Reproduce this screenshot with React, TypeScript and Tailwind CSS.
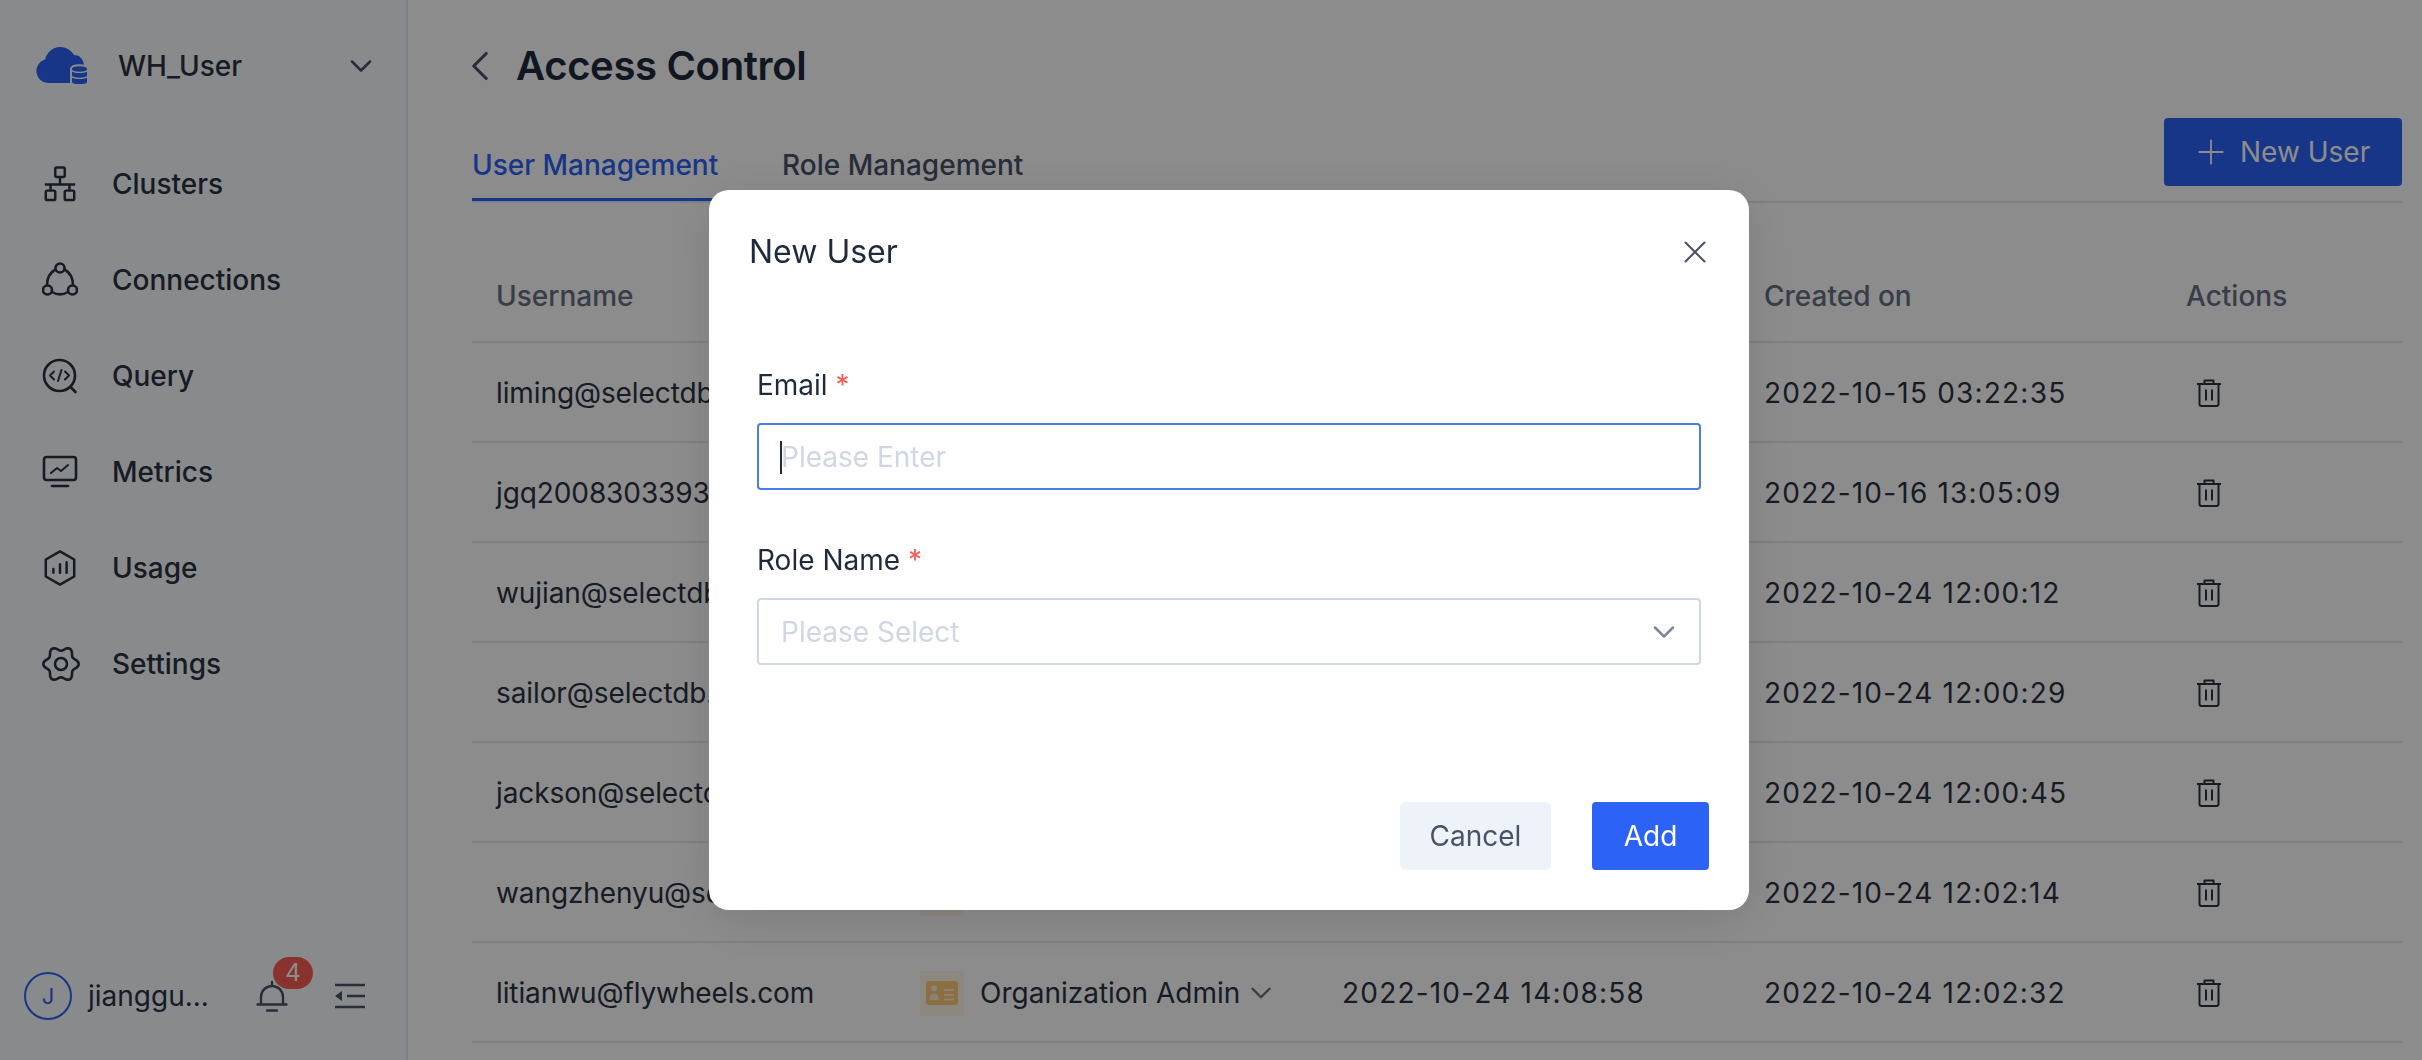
import React from 'react';
import { ChevronDown, ChevronLeft, Plus, X } from 'lucide-react';

const iconClass = 'w-[36px] h-[36px] shrink-0';

const ClustersIcon = () => (
  <svg viewBox="0 0 36 38" className={iconClass} fill="none" stroke="#2a3342" strokeWidth="2.6" strokeLinejoin="round">
    <rect x="13" y="1.5" width="10" height="10" rx="1.5" />
    <path d="M18 11.5V19M2 19.5h32M8 19.5V26M28 19.5V26" />
    <rect x="3" y="26" width="10" height="10" rx="1.5" />
    <rect x="23" y="26" width="10" height="10" rx="1.5" />
  </svg>
);

const ConnectionsIcon = () => (
  <svg viewBox="0 0 36 36" className={iconClass} fill="none" stroke="#2a3342" strokeWidth="2.6">
    <circle cx="18" cy="6" r="4.5" />
    <circle cx="5.5" cy="28" r="4.5" />
    <circle cx="30.5" cy="28" r="4.5" />
    <path d="M13.5 7.5C8 10.5 5 16 5 23.5M22.5 7.5C28 10.5 31 16 31 23.5M10 30c5 3 11 3 16 0" />
  </svg>
);

const QueryIcon = () => (
  <svg viewBox="0 0 36 36" className={iconClass} fill="none" stroke="#2a3342" strokeWidth="2.6" strokeLinecap="round" strokeLinejoin="round">
    <circle cx="17.5" cy="17.5" r="15.5" />
    <path d="M28.5 29l5 5" />
    <path d="M12 13.5l-4 4 4 4M23 13.5l4 4-4 4M19.5 12l-3.5 11" strokeWidth="2" />
  </svg>
);

const MetricsIcon = () => (
  <svg viewBox="0 0 36 36" className={iconClass} fill="none" stroke="#2a3342" strokeWidth="2.6" strokeLinecap="round" strokeLinejoin="round">
    <rect x="2" y="3" width="32" height="23" rx="2.5" />
    <path d="M9 19l6-5 4 3 7-6" strokeWidth="2" />
    <path d="M10 32h16" />
  </svg>
);

const UsageIcon = () => (
  <svg viewBox="0 0 36 38" className={iconClass} fill="none" stroke="#2a3342" strokeWidth="2.6" strokeLinecap="round" strokeLinejoin="round">
    <path d="M18 1.5l15 8.5v18l-15 8.5-15-8.5V10z" />
    <path d="M11 20v4M18 15v9M25 13v11" />
  </svg>
);

// wavy cog outline: six rounded lobes, with a dip at the top
const gearPath = Array.from({ length: 72 }, (_, i) => {
  const t = (i * 5 * Math.PI) / 180;
  const r = 15.5 - 2.2 * Math.cos(6 * t);
  const x = 19 + r * Math.sin(t);
  const y = 18 - r * Math.cos(t);
  return `${i === 0 ? 'M' : 'L'}${x.toFixed(2)} ${y.toFixed(2)}`;
}).join('') + 'Z';

const SettingsIcon = () => (
  <svg viewBox="0 0 38 36" className="w-[38px] h-[36px] shrink-0" fill="none" stroke="#2a3342" strokeWidth="2.6" strokeLinejoin="round">
    <path d={gearPath} />
    <circle cx="19" cy="18" r="6" />
  </svg>
);

const TrashIcon = () => (
  <svg viewBox="0 0 26 28" className="w-[26px] h-[28px]" fill="none" stroke="#2a3342" strokeWidth="2" strokeLinejoin="round">
    <path d="M8.500 4.500V1.500h9v3M1 5h24M3.500 5v20a2 2 0 0 0 2 2h15a2 2 0 0 0 2-2V5M10 10.500v11M16 10.500v11" />
  </svg>
);

const nav = [
  { label: 'Clusters', icon: <ClustersIcon /> },
  { label: 'Connections', icon: <ConnectionsIcon /> },
  { label: 'Query', icon: <QueryIcon /> },
  { label: 'Metrics', icon: <MetricsIcon /> },
  { label: 'Usage', icon: <UsageIcon /> },
  { label: 'Settings', icon: <SettingsIcon /> },
];

const users = [
  { email: 'liming@selectdb.com', login: '2022-10-24 14:08:58', created: '2022-10-15 03:22:35' },
  { email: 'jgq2008303393@gmail.com', login: '2022-10-24 14:08:58', created: '2022-10-16 13:05:09' },
  { email: 'wujian@selectdb.com', login: '2022-10-24 14:08:58', created: '2022-10-24 12:00:12' },
  { email: 'sailor@selectdb.com', login: '2022-10-24 14:08:58', created: '2022-10-24 12:00:29' },
  { email: 'jackson@selectdb.com', login: '2022-10-24 14:08:58', created: '2022-10-24 12:00:45' },
  { email: 'wangzhenyu@selectdb.com', login: '2022-10-24 14:08:58', created: '2022-10-24 12:02:14' },
  { email: 'litianwu@flywheels.com', login: '2022-10-24 14:08:58', created: '2022-10-24 12:02:32' },
];

const Sidebar = () => (
  <aside className="w-[408px] shrink-0 h-full flex flex-col bg-[#f9fbfe] border-r-2 border-[#e4e8ef]">
    <div className="flex items-center h-[132px] pl-[36px] pr-[26px]">
      <svg viewBox="0 0 52 38" className="w-[52px] h-[38px] shrink-0">
        <path d="M12 36a12 12 0 0 1-3-23.500C11 5 17 0 24 0c6 0 11 3 14 8 5 0 9 3 10 10H38v18z" fill="#2c63f6" />
        <path d="M35 22c0-5 17-5 17 0v13c0 4-17 4-17 0z" fill="#2c63f6" stroke="#f9fbfe" strokeWidth="2" />
        <path d="M36 23.500c2 2.500 13 2.500 15 0M36 29.500c2 2.500 13 2.500 15 0" fill="none" stroke="#f9fbfe" strokeWidth="1.300" />
      </svg>
      <span className="ml-[30px] text-[28px] font-medium text-[#2a3342] flex-1">WH_User</span>
      <ChevronDown className="mr-[1px] w-[36px] h-[36px] text-[#4a5268]" strokeWidth={1.700} />
    </div>
    <nav className="flex flex-col pt-[4px]">
      {nav.map((item) => (
        <div key={item.label} className="flex items-center h-[96px] pl-[42px]">
          <span className="w-[70px] flex items-center">{item.icon}</span>
          <span className="text-[28px] font-medium text-[#2a3342]">{item.label}</span>
        </div>
      ))}
    </nav>
    <div className="mt-auto h-[100px] pb-[28px] flex items-center pl-[24px] pr-[40px]">
      <span className="w-[48px] h-[48px] rounded-full border-2 border-[#2c63f6] flex items-center justify-center text-[#2c63f6] text-[22px]">J</span>
      <span className="ml-[16px] w-[122px] text-[28px] text-[#2a3342]">jianggu...</span>
      <div className="relative ml-[46px] w-[32px] h-[32px]">
        <svg viewBox="0 0 32 32" className="w-[32px] h-[32px]" fill="none" stroke="#4a5268" strokeWidth="2.400" strokeLinecap="round">
          <path d="M1.500 24.500h29M5 24.500V17a11 11 0 0 1 22 0v7.500M16 2v4M11 30.500h10" />
        </svg>
        <span className="absolute left-[17px] top-[-23px] w-[40px] h-[32px] rounded-full bg-[#fa5d55] text-white text-[24px] leading-[32px] text-center">4</span>
      </div>
      <svg viewBox="0 0 30 26" className="ml-[47px] w-[30px] h-[26px]" fill="none" stroke="#4a5268" strokeWidth="2.400">
        <path d="M0 2h30M12 13h18M0 24h30" />
        <path d="M0 13l7-5v10z" fill="#4a5268" stroke="none" />
      </svg>
    </div>
  </aside>
);

const Main = () => (
  <main className="flex-1 min-w-0 pl-[64px] pr-[20px]">
    <div className="flex items-center h-[132px]">
      <ChevronLeft className="-ml-[17px] w-[50px] h-[50px] text-[#4a5268]" strokeWidth={1.500} />
      <h1 className="ml-[11px] text-[40px] font-semibold tracking-[-0.33px] text-[#1f2a3d]">Access Control</h1>
    </div>
    <div className="flex items-start justify-between h-[71px] border-b-2 border-[#e6e9f2]">
      <div className="flex h-full text-[28px] font-medium">
        <div className="h-full w-[246px] border-b-[3px] border-[#2c63f6] text-[#2c63f6] pt-[12px] whitespace-nowrap">User Management</div>
        <div className="ml-[64px] text-[#4a5268] pt-[12px] whitespace-nowrap">Role Management</div>
      </div>
      <button className="-mt-[14px] w-[238px] h-[68px] rounded-[4px] bg-[#2c63f6] text-white text-[28px] flex items-center pl-[27px] gap-[9px]">
        <Plus className="w-[40px] h-[40px]" strokeWidth={1.100} />
        New User
      </button>
    </div>
    <div className="grid grid-cols-[424px_422px_422px_422px_241px] items-center h-[140px] pt-[48px] border-b-2 border-[#e6e9f2] pl-[24px] text-[28px] font-medium text-[#667085]">
      <span>Username</span>
      <span>Role Name</span>
      <span>Last Login</span>
      <span>Created on</span>
      <span>Actions</span>
    </div>
    {users.map((user) => (
      <div key={user.email} className="grid grid-cols-[424px_422px_422px_422px_241px] items-center h-[100px] pt-[2px] border-b-2 border-[#e6e9f2] pl-[24px] text-[28px] text-[#2a3342]">
        <span className="tracking-[-0.1px]">{user.email}</span>
        <span className="flex items-center">
          <span className="w-[44px] h-[45px] bg-[#fff8ea] flex items-center justify-center">
            <svg viewBox="0 0 32 24" className="w-[32px] h-[24px]">
              <rect width="32" height="24" rx="3" fill="#fdc878" />
              <circle cx="8" cy="7.500" r="3" fill="#ffedcf" />
              <path d="M3.500 19c0-5 1.500-6.500 4.500-6.500s4.500 1.500 4.500 6.500zM18 8h10v2H18zM18 13h10v2H18zM18 17.500h10v2H18z" fill="#ffedcf" />
            </svg>
          </span>
          <span className="ml-[16px] whitespace-nowrap">Organization Admin</span>
          <ChevronDown className="ml-[4px] w-[34px] h-[34px] text-[#667085]" strokeWidth={1.700} />
        </span>
        <span className="tracking-[1.2px]">{user.login}</span>
        <span className="tracking-[1.2px]">{user.created}</span>
        <span className="pl-[10px] flex items-center"><TrashIcon /></span>
      </div>
    ))}
  </main>
);

const NewUserModal = () => (
  <div className="fixed inset-0 bg-black/45 flex items-start justify-center pt-[190px] pl-[36px]">
    <div className="w-[1040px] h-[720px] rounded-[20px] bg-white shadow-[0_10px_50px_rgba(0,0,0,0.12)] flex flex-col px-[40px]">
      <div className="flex items-center justify-between h-[124px]">
        <h2 className="text-[32px] text-[#1f2a3d]">New User</h2>
        <X className="w-[38px] h-[38px] text-[#4a5268] -mr-[5px]" strokeWidth={1.300} />
      </div>
      <div className="flex flex-col pl-[8px] pr-[8px] pt-[48px] text-[28px]">
        <label className="h-[46px] leading-[46px] text-[#1f2a3d]">
          Email <span className="text-[#f25c54]">*</span>
        </label>
        <div className="relative mt-[15px]">
          <input
            placeholder="Please Enter"
            className="w-full h-[67px] border-2 border-[#4a7de8] rounded-[4px] pl-[22px] outline-none text-[28px] placeholder:text-[#cfd6e4]"
          />
          <span className="absolute left-[23px] top-[18px] w-[2px] h-[33px] bg-[#1f2a3d]" />
        </div>
        <label className="mt-[47px] h-[46px] leading-[46px] text-[#1f2a3d]">
          Role Name <span className="text-[#f25c54]">*</span>
        </label>
        <div className="mt-[15px] h-[67px] border-2 border-[#cfd6e4] rounded-[4px] pl-[22px] pr-[17px] flex items-center justify-between text-[#cfd6e4]">
          Please Select
          <ChevronDown className="w-[36px] h-[36px] text-[#7c879c]" strokeWidth={1.700} />
        </div>
      </div>
      <div className="mt-auto mb-[40px] flex justify-end gap-[41px] text-[28px]">
        <button className="w-[151px] h-[68px] rounded-[6px] bg-[#eef2f9] text-[#4a5268]">Cancel</button>
        <button className="w-[117px] h-[68px] rounded-[4px] bg-[#2c63f6] text-white">Add</button>
      </div>
    </div>
  </div>
);

export default function App() {
  return (
    <div className="relative flex h-[1060px] w-full overflow-hidden bg-white font-['Inter',sans-serif]">
      <Sidebar />
      <Main />
      <NewUserModal />
    </div>
  );
}
